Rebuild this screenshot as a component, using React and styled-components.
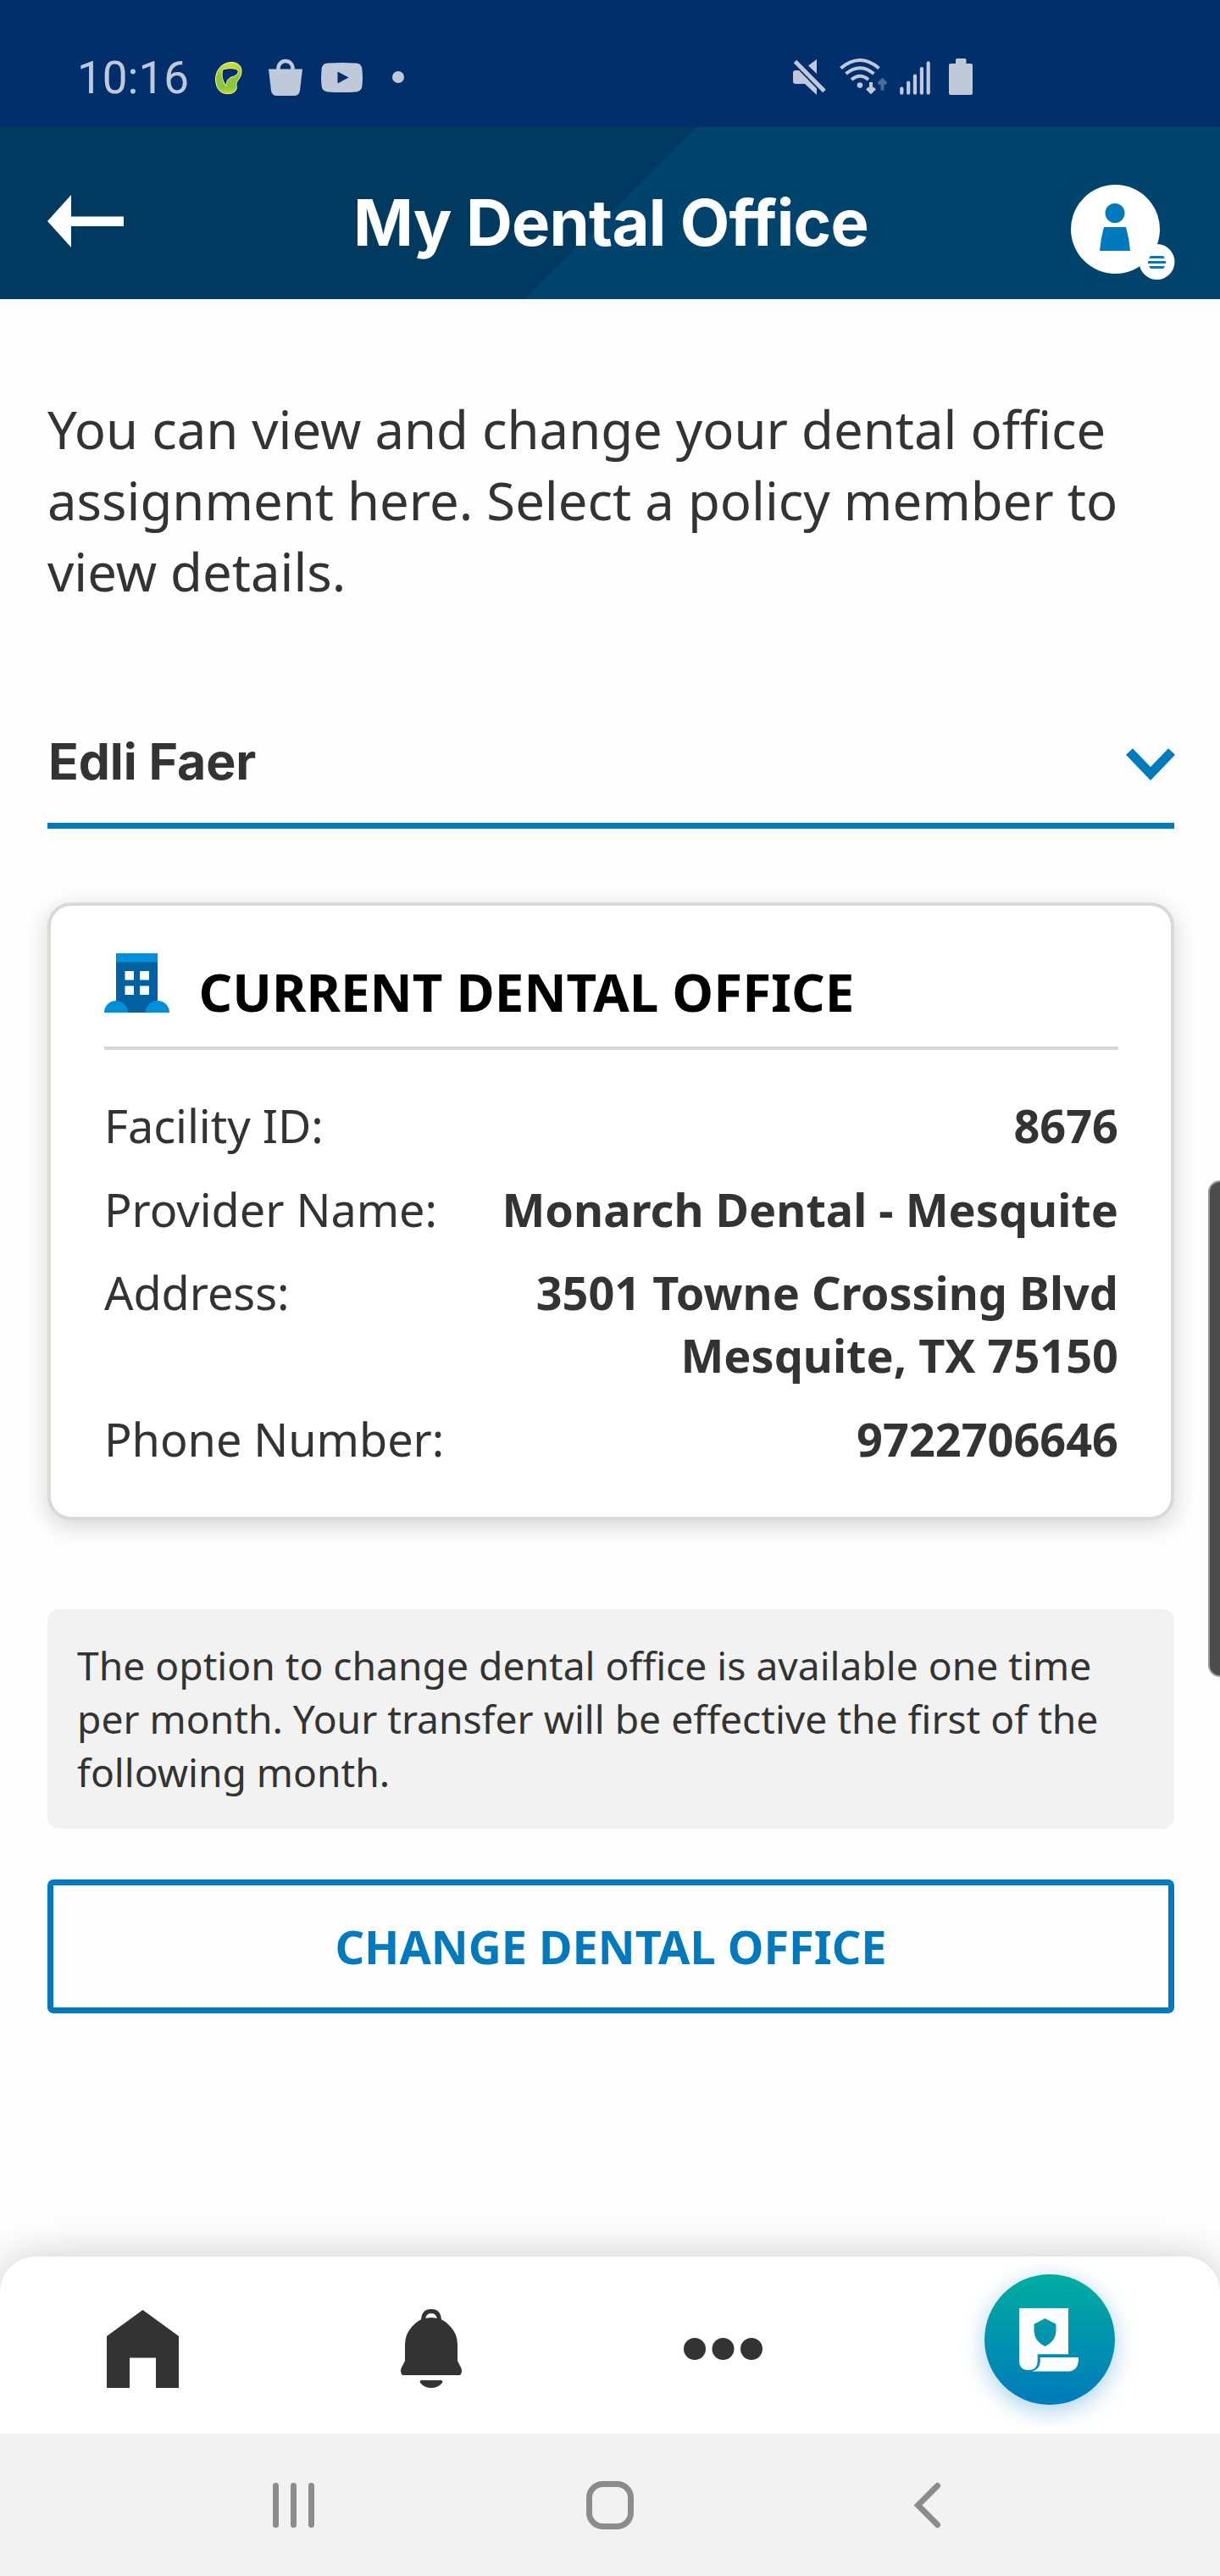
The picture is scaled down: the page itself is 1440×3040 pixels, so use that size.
import React from "react";
import styled, { createGlobalStyle } from "styled-components";

const Global = createGlobalStyle`
  *{box-sizing:border-box}
  body{margin:0;background:#fefefe}
`;
const sans = `"Noto Sans", sans-serif`;
const display = `Inter, sans-serif`;

const Screen = styled.div`
  width: 1440px; height: 3040px; display: flex; flex-direction: column;
  background: #fefefe; color: #333; font-family: ${sans}; position: relative; overflow: hidden;
`;
const StatusBar = styled.div`
  height: 150px; flex: none; background: #002f6c; color: #bfc9da;
  display: flex; align-items: flex-start; padding: 60px 0 0 91px;
`;
const Time = styled.div`
  font: 400 53px/64px Roboto, sans-serif; width: 163px; white-space: nowrap;
`;
const Glyph = styled.svg`
  display: block; flex: none; width: ${p => p.$w}px; height: ${p => p.$h}px;
  margin-left: ${p => p.$ml || 0}px; margin-top: ${p => p.$mt || 0}px; margin-bottom: ${p => p.$mb || 0}px; overflow: visible;
`;
const Header = styled.header`
  height: 203px; flex: none; display: grid; grid-template-columns: 122px 1fr 122px; align-items: start;
  padding: 68px 54px 0 56px;
  background: linear-gradient(135deg, #003a61 0 580.8px, #00436c 581.6px);
`;
const Title = styled.h1`
  margin: -2px 0 0; font: 700 76px/92px ${display}; color: #fff; white-space: nowrap; letter-spacing: -0.8px;
  text-align: center;
`;
const Content = styled.main`
  padding: 110.5px 54px 0 56px; flex: 1; display: flex; flex-direction: column;
`;
const Intro = styled.p`margin: 0; font-size: 61.6px; line-height: 84px;`;
const Select = styled.button`
  margin-top: 138.5px; height: 124px; border: 0; border-bottom: 7px solid #007abc; background: none;
  padding: 0 0 36px; display: flex; align-items: flex-end; justify-content: space-between;
  font: 700 59px/72px ${display}; letter-spacing: -0.1px; color: #333; text-align: left;
`;
const SelectedName = styled.span`padding-left: 1px;`;
const Card = styled.section`
  margin-top: 87px; height: 728.5px; border: 4px solid #d9dad5; border-radius: 28px; background: #fff;
  padding: 56px 62px 0 63px; box-shadow: 0 7px 28px rgba(0,0,0,.17);
`;
const CardHead = styled.div`
  height: 114px; border-bottom: 4px solid #d9dad5; display: flex; align-items: flex-start;
`;
const CardTitle = styled.h2`
  margin: 2px 0 0 34.5px; font-size: 61.8px; line-height: 86px; font-weight: 700; color: #000; white-space: nowrap;
`;
const Rows = styled.dl`margin: 52px 0 0; display: flex; flex-direction: column; gap: 24.5px;`;
const Row = styled.div`display: flex; justify-content: space-between; font-size: 54px; line-height: 74px;`;
const Label = styled.dt`letter-spacing: -0.05px;`;
const Value = styled.dd`margin: 0; font-weight: 700; text-align: right;`;
const Notice = styled.div`
  margin-top: 105.5px; height: 259px; background: #f2f2f2; border-radius: 14px;
  padding: 35px; font-size: 46.2px; line-height: 63px;
`;
const Action = styled.button`
  margin-top: 60px; height: 158px; border: 7px solid #007abc; border-radius: 7px; background: transparent;
  color: #007abc; font: 700 54px/76px ${sans}; display: flex; align-items: center; justify-content: center;
`;
const TabBar = styled.nav`
  height: 209px; flex: none; background: #fff; border-radius: 42px 42px 0 0; box-shadow: 0 0 50px rgba(0,0,0,.2);
  display: flex; align-items: flex-start; padding-left: 126px;
`;
const PlanButton = styled.div`
  width: 154px; height: 154px; margin: 21px 0 0 262px; border-radius: 50%;
  background: linear-gradient(#00ada0, #007abc); box-shadow: 0 7px 28px rgba(0,122,188,.35);
  display: flex; padding: 40px 0 0 41px;
`;
const SystemBar = styled.div`
  height: 168px; flex: none; background: #f2f2f2; display: flex; align-items: flex-start; padding: 56px 0 0 322px; z-index: 1;
`;
const EdgeHandle = styled.div`
  position: absolute; right: -14px; top: 1393px; width: 28px; height: 586px; border-radius: 14px;
  background: #4c4c4c; border: 2px solid #999;
`;

const rows = [
  ["Facility ID:", "8676"],
  ["Provider Name:", "Monarch Dental - Mesquite"],
  ["Address:", <>3501 Towne Crossing Blvd<br />Mesquite, TX 75150</>],
  ["Phone Number:", "9722706646"],
];

export default function App() {
  return (
    <Screen>
      <Global />
      <StatusBar>
        <Time>10:16</Time>
        <Glyph $w={32} $h={39} $mt={12.5} viewBox="0 0 32 39">
          <defs>
            <linearGradient id="leaf" x1="0" y1="0" x2="0" y2="1"><stop offset="0" stopColor="#d6e033" /><stop offset=".45" stopColor="#8cc63f" /><stop offset=".8" stopColor="#8cc63f" /><stop offset="1" stopColor="#c5dc35" /></linearGradient>
          </defs>
          <path fillRule="evenodd" d="M19 .5C27 .5 31.500 5 31 12C31 18 26 22 25 25C24.500 28 26 30 25 32C23 37 18 38 13 37.500C5 37 .5 30 .5 20C1 9 8 1 19 .5ZM9 9C7 15 8 22 13 28.500C13 23 15 20 19 18C24 17 28 14 27 10C23 6.500 14 7.500 9 9Z" fill="url(#leaf)" stroke="#f4f6a0" strokeWidth="1" />
        </Glyph>
        <Glyph $w={40} $h={43} $ml={31} $mt={10} viewBox="0 0 40 43">
          <path d="M0 11.500H40L37 37Q36 43 30 43H10Q4 43 3 37Z" fill="currentColor" /><path d="M11.500 13V10.500a8.500 8.500 0 0 1 17 0V13" fill="none" stroke="currentColor" strokeWidth="4.500" />
        </Glyph>
        <Glyph $w={49} $h={35} $ml={22} $mt={13.5} viewBox="0 0 49 35">
          <path fillRule="evenodd" d="M8 .6Q24.500-.6 41 .6Q48 1 48.500 8Q49.500 17.500 48.500 27Q48 34 41 34.400Q24.500 35.600 8 34.400Q1 34 .5 27Q-.5 17.500 .5 8Q1 1 8 .6ZM19.500 10.500V24.500L32.500 17.500Z" fill="currentColor" />
        </Glyph>
        <Glyph $w={14} $h={14} $ml={35} $mt={24} viewBox="0 0 14 14"><circle cx="7" cy="7" r="7" fill="currentColor" /></Glyph>
        <Glyph $w={39} $h={42} $ml={458.5} $mt={9.5} viewBox="0 0 39 42">
          <path d="M0 16Q0 13 3 13H7L28 34.500V42L14 29H3Q0 29 0 26ZM28 0V17L18 7.500Z" fill="currentColor" /><path d="M2.500 2.500L37 37.500" stroke="currentColor" strokeWidth="5" />
        </Glyph>
        <Glyph $w={57} $h={43} $ml={16} $mt={9} viewBox="0 0 57 43">
          <g fill="none" stroke="currentColor" strokeWidth="4"><path d="M1.500 11.500Q24 -7.500 46.500 11.500M7.500 18Q24 4.500 40.500 18M14 25Q24 16.500 34 25" /><path d="M37 28V39M32.500 35L37 39.500L41.500 35" /><path opacity=".4" d="M50.500 37.500V26M46 30L50.500 25.500L55 30" /></g><circle cx="24" cy="31.500" r="3.300" fill="currentColor" />
        </Glyph>
        <Glyph $w={36} $h={40} $ml={14.5} $mt={12} viewBox="0 0 36 40">
          <path d="M2.300 32.500V37.700M10.200 25.500V37.700M18 17.500V37.700M25.900 9V37.700M33.700 2.300V37.700" stroke="currentColor" strokeWidth="4.200" strokeLinecap="round" />
        </Glyph>
        <Glyph $w={28} $h={43} $ml={22} $mt={9} viewBox="0 0 28 43">
          <path d="M8 1.500Q8 0 9.500 0H19Q20.500 0 20.500 1.500V6H26Q28 6 28 8V41Q28 43 26 43H2Q0 43 0 41V8Q0 6 2 6H8Z" fill="currentColor" />
        </Glyph>
      </StatusBar>
      <Header>
        <Glyph $w={90} $h={62} $mt={12} viewBox="0 0 90 62"><path d="M0 31L28 0V25.500H90V37H28V62Z" fill="#fff" /></Glyph>
        <Title>My Dental Office</Title>
        <Glyph $w={122} $h={112} viewBox="0 0 122 112">
          <circle cx="52.500" cy="52.500" r="52.500" fill="#fff" /><circle cx="101.500" cy="91" r="21" fill="#fff" />
          <g fill="#007abc"><circle cx="52" cy="33.500" r="11.500" /><path d="M39 50H65Q69 64 70 78H34Q35 64 39 50Z" /><path d="M94 84H109L111 87H92ZM91 90H112V93H91ZM92 96H111L109 99H94Z" /></g>
        </Glyph>
      </Header>
      <Content>
        <Intro>You can view and change your dental office assignment here. Select a policy member to view details.</Intro>
        <Select>
          <SelectedName>Edli Faer</SelectedName>
          <Glyph $w={58} $h={38} $mb={14} viewBox="0 0 58 38"><path d="M5 4L30 30L55 4" fill="none" stroke="#007abc" strokeWidth="11" /></Glyph>
        </Select>
        <Card>
          <CardHead>
            <Glyph $w={77} $h={70} viewBox="0 0 77 70">
              <path d="M14 10H63V70H14Z" fill="#0061a0" /><path d="M14 0H63V10.500H14ZM0 70A14 14 0 0 1 28 70ZM49 70A14 14 0 0 1 77 70Z" fill="#0090da" />
              <path d="M24.500 21H35V31.500H24.500ZM42 21H53V31.500H42ZM24.500 38.500H35V49H24.500ZM42 38.500H53V49H42Z" fill="#fff" />
            </Glyph>
            <CardTitle>CURRENT DENTAL OFFICE</CardTitle>
          </CardHead>
          <Rows>{rows.map(([k, v]) => <Row key={k}><Label>{k}</Label><Value>{v}</Value></Row>)}</Rows>
        </Card>
        <Notice>The option to change dental office is available one time per month. Your transfer will be effective the first of the following month.</Notice>
        <Action>CHANGE DENTAL OFFICE</Action>
      </Content>
      <TabBar>
        <Glyph $w={85} $h={92} $mt={62.5} viewBox="0 0 85 92"><path d="M42.500 0L85 31V92H58V56.500H27V92H0V31Z" fill="#333" /></Glyph>
        <Glyph $w={72} $h={93} $ml={262} $mt={62} viewBox="0 0 72 93">
          <path d="M36 10Q50 10 59 21Q67 30 67 42V61L70 67Q72 70 72 73Q72 76 70 78H2Q0 76 0 73Q0 70 2 67L5 61V42Q5 30 13 21Q22 10 36 10ZM24 84H48Q50 85 49 87Q44 93 36 93Q28 93 23 87Q22 85 24 84Z" fill="#333" /><path d="M26.500 13Q27 2.500 36 2.500Q45 2.500 45.500 13" fill="none" stroke="#333" strokeWidth="5" />
        </Glyph>
        <Glyph $w={93} $h={26} $ml={262} $mt={96} viewBox="0 0 93 26"><g fill="#333"><circle cx="13" cy="13" r="13" /><circle cx="46.500" cy="13" r="13" /><circle cx="80" cy="13" r="13" /></g></Glyph>
        <PlanButton>
          <Glyph $w={70} $h={75} viewBox="0 0 70 75">
            <path fillRule="evenodd" fill="#fff" d="M0 0H58V54.200H21.700V62Q21.700 73 11 73Q0 73 0 62ZM30.500 12L17.500 18.700V27Q18 39 30.500 45Q43 39 43.500 27V18.700Z" /><path fill="#fff" d="M24.700 58H70V62Q69 73 59 74.500H15Q24.700 72 24.700 62Z" />
          </Glyph>
        </PlanButton>
      </TabBar>
      <SystemBar>
        <Glyph $w={49} $h={53} $mt={2} viewBox="0 0 49 53"><path d="M3.500 3.500V49.500M24.500 3.500V49.500M45.500 3.500V49.500" stroke="#8c8c8c" strokeWidth="7" strokeLinecap="round" /></Glyph>
        <Glyph $w={56} $h={57} $ml={321} viewBox="0 0 56 57"><rect x="3.500" y="3.500" width="49" height="50" rx="16" fill="none" stroke="#8c8c8c" strokeWidth="7" /></Glyph>
        <Glyph $w={31} $h={53} $ml={331} $mt={2} viewBox="0 0 31 53"><path d="M27.500 3.500L4.500 26.500L27.500 49.500" fill="none" stroke="#8c8c8c" strokeWidth="7" strokeLinecap="round" /></Glyph>
      </SystemBar>
      <EdgeHandle />
    </Screen>
  );
}
